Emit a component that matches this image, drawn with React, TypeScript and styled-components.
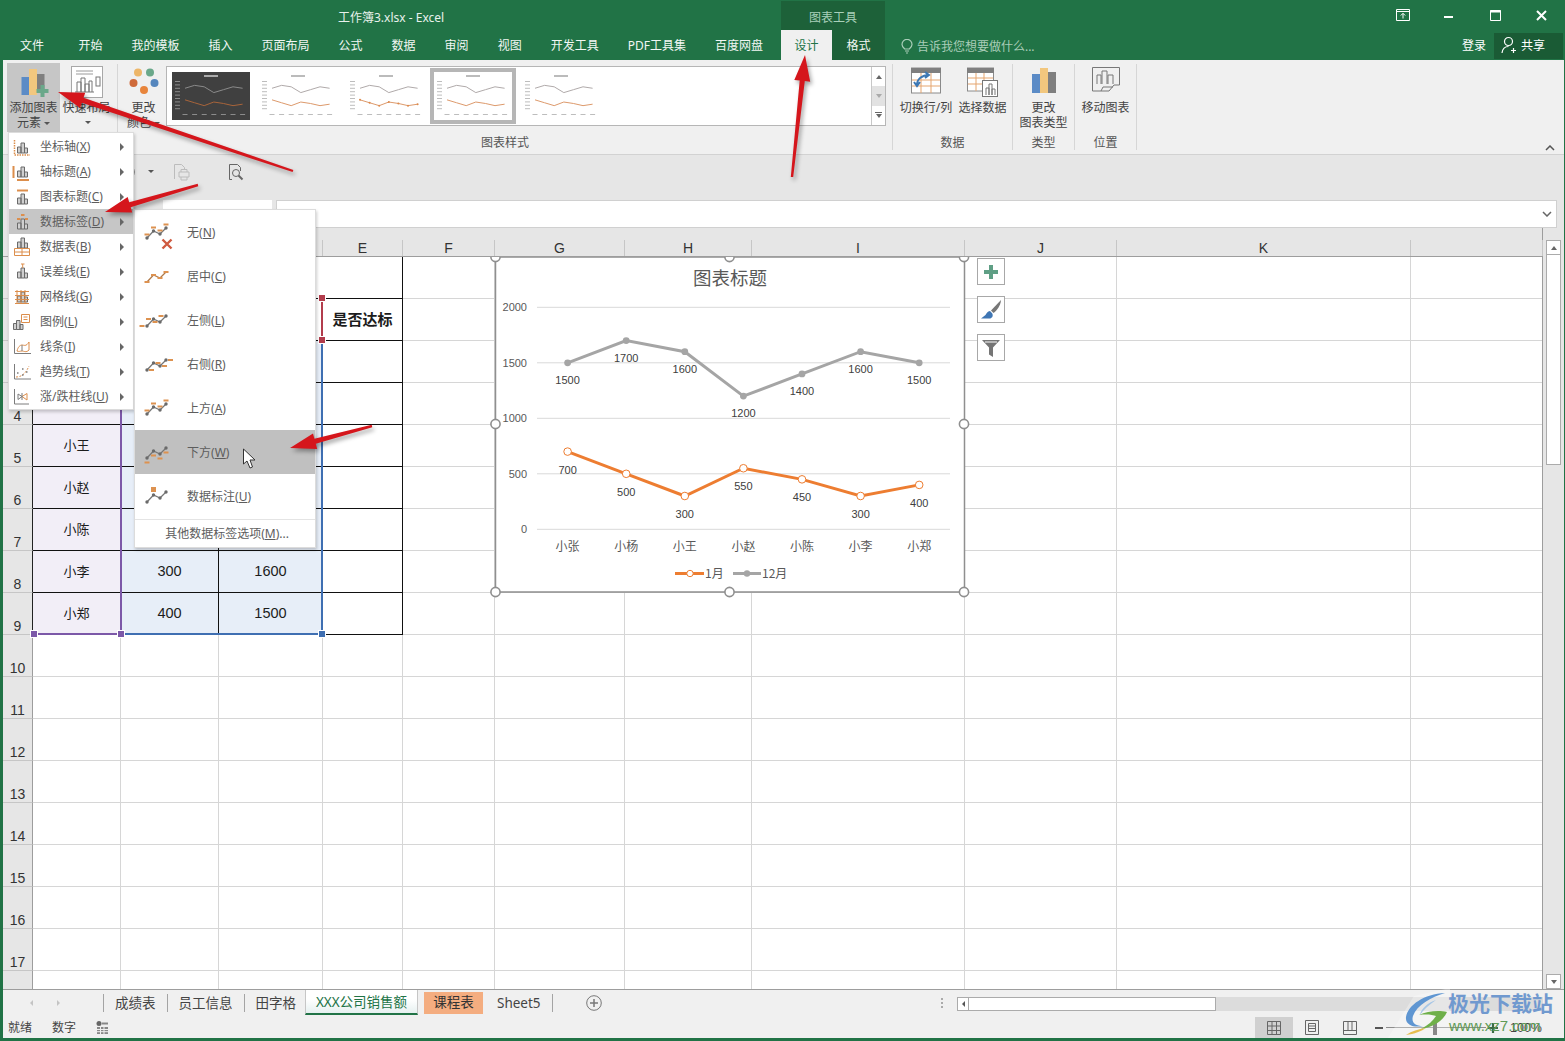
import React from 'react';
import styled, { createGlobalStyle } from 'styled-components';

const UI_FONT = '"Noto Sans", "Noto Sans CJK SC", sans-serif';
const SHEET_FONT = '"Liberation Sans", "Noto Sans CJK SC", sans-serif';
const GREEN = '#217346';

const COLS = [88, 98, 104, 80, 92, 130, 127, 213, 152, 294, 132];
const COL_TEMPLATE = `30px ${COLS.map((c) => c + 'px').join(' ')}`;
// the first three column letters lie under the open menus
const COL_NAMES = ['', '', '', 'E', 'F', 'G', 'H', 'I', 'J', 'K', ''];

const PEOPLE = ['小张', '小杨', '小王', '小赵', '小陈', '小李', '小郑'];
const JAN = [700, 500, 300, 550, 450, 300, 400];
const DEC = [1500, 1700, 1600, 1200, 1400, 1600, 1500];

const GlobalStyle = createGlobalStyle`
  html, body {
    margin: 0;
    padding: 0;
    overflow: hidden;
    background: ${GREEN};
  }
  * { box-sizing: border-box; }
`;

const Root = styled.div`
  position: relative;
  width: 1565px;
  height: 1041px;
  overflow: hidden;
  background: ${GREEN};
  font-family: ${UI_FONT};
  font-size: 12px;
  color: #444;
  display: flex;
  flex-direction: column;
`;

const TitleBar = styled.div`
  height: 30px;
  display: grid;
  grid-template-columns: 781px 104px 1fr;
  color: #fff;
  flex: none;
`;

const DocTitle = styled.div`
  padding: 10px 0 0 338px;
  line-height: 16px;
  color: #e8f1ec;
`;

const ContextTitle = styled.div`
  margin-top: 1px;
  background: #1d6139;
  color: #a9d0b9;
  text-align: center;
  line-height: 16px;
  padding-top: 9px;
`;

const WindowButtons = styled.div`
  display: flex;
  justify-content: flex-end;
  padding-right: 1px;
`;

const WindowButton = styled.div`
  width: 46px;
  height: 30px;
  display: flex;
  align-items: center;
  justify-content: center;
`;

const TabBar = styled.div`
  height: 30px;
  display: flex;
  align-items: stretch;
  padding-left: 3px;
  flex: none;
  color: #fff;
`;

const Tab = styled.div<{ $file?: boolean }>`
  padding: ${(p) => (p.$file ? '0 20px 0 17px' : '0 14.5px')};
  line-height: 31px;
  color: #f2f7f4;
`;

const ContextTabs = styled.div`
  display: flex;
  margin-left: 3.5px;
  background: #1d6139;
`;

const ContextTab = styled.div<{ $active?: boolean }>`
  width: ${(p) => (p.$active ? 51 : 53)}px;
  text-align: center;
  line-height: 31px;
  background: ${(p) => (p.$active ? '#f0f0f0' : 'transparent')};
  color: ${(p) => (p.$active ? '#217346' : '#f2f7f4')};
`;

const TellMe = styled.div`
  margin-left: 16px;
  padding-top: 2px;
  display: flex;
  align-items: center;
  gap: 4px;
  color: #a9cdb8;
`;

const LoginLink = styled.div`
  margin-left: auto;
  margin-right: 8px;
  line-height: 31px;
`;

const ShareButton = styled.div`
  width: 69px;
  height: 26px;
  margin: 3px 2px 0 0;
  padding: 0 0 2px 7px;
  background: #1a5b35;
  display: flex;
  align-items: center;
  gap: 3px;
`;

const Ribbon = styled.div`
  margin: 0 1px 0 3px;
  height: 95px;
  background: #f0f0f0;
  border-bottom: 1px solid #d2d2d2;
  display: flex;
  flex: none;
  position: relative;
`;

const Group = styled.div<{ $width: number }>`
  width: ${(p) => p.$width}px;
  margin-top: 4px;
  height: 86px;
  padding: 0 3px;
  border-right: 1px solid #d6d6d6;
  display: flex;
  flex-direction: column;
  flex: none;
`;

const GroupBody = styled.div`
  display: flex;
  margin-top: -1px;
  height: 69px;
  flex: none;
`;

const GroupLabel = styled.div`
  text-align: center;
  line-height: 16px;
  color: #555;
  margin-top: 3px;
  flex: none;
`;

const BigButton = styled.div<{ $width: number; $active?: boolean; $inset?: number }>`
  width: ${(p) => p.$width}px;
  margin-left: ${(p) => p.$inset ?? 0}px;
  display: flex;
  flex-direction: column;
  align-items: center;
  padding-top: 3px;
  line-height: 15px;
  text-align: center;
  white-space: nowrap;
  flex: none;
  background: ${(p) => (p.$active ? '#c6c6c6' : 'transparent')};
`;

const IconSlot = styled.div`
  height: 34px;
  display: flex;
  align-items: flex-start;
  justify-content: center;
`;

const Caret = styled.span<{ $drop?: number }>`
  display: inline-block;
  width: 0;
  height: 0;
  margin-left: 3px;
  margin-top: ${(p) => p.$drop ?? 0}px;
  vertical-align: middle;
  border-left: 3px solid transparent;
  border-right: 3px solid transparent;
  border-top: 3px solid #555;
`;

const Gallery = styled.div`
  width: 720px;
  height: 60px;
  margin: 3px 0 0 0;
  background: #fff;
  border: 1px solid #b6b6b6;
  display: flex;
  flex: none;
`;

const ThumbRow = styled.div`
  flex: 1;
  display: flex;
  align-items: center;
`;

const ThumbSlot = styled.div`
  width: 87.5px;
  display: flex;
  justify-content: center;
`;

const ThumbFrame = styled.div<{ $selected?: boolean }>`
  width: 78px;
  height: 48px;
  display: flex;
  box-shadow: ${(p) => (p.$selected ? '0 0 0 4px #b6b6b6' : 'none')};
`;

const GalleryScroll = styled.div`
  width: 14px;
  display: flex;
  flex-direction: column;
  border-left: 1px solid #c8c8c8;
`;

const GalleryStep = styled.div<{ $dim?: boolean }>`
  flex: 1;
  display: flex;
  flex-direction: column;
  align-items: center;
  justify-content: center;
  gap: 1px;
  background: ${(p) => (p.$dim ? '#e2e2e2' : '#fff')};
`;

const StepUp = styled.span`
  width: 0;
  height: 0;
  border-left: 3px solid transparent;
  border-right: 3px solid transparent;
  border-bottom: 4px solid #666;
`;

const StepDown = styled.span<{ $dim?: boolean }>`
  width: 0;
  height: 0;
  border-left: 3px solid transparent;
  border-right: 3px solid transparent;
  border-top: 4px solid ${(p) => (p.$dim ? '#aaa' : '#666')};
`;

const StepBar = styled.span`
  width: 7px;
  height: 1px;
  background: #666;
`;

const CollapseRibbon = styled.div`
  position: absolute;
  right: 9px;
  bottom: 3px;
  line-height: 0;
`;

const QuickBar = styled.div`
  margin: 0 1px 0 3px;
  height: 45px;
  background: #e6e6e6;
  display: flex;
  align-items: center;
  padding: 0 0 12px 127px;
  flex: none;
`;

const QuickIcon = styled.div<{ $gap: number }>`
  margin-left: ${(p) => p.$gap}px;
  line-height: 0;
`;

const FormulaBar = styled.div`
  margin: 0 1px 0 3px;
  height: 28px;
  background: #e6e6e6;
  display: flex;
  padding-left: 160px;
  gap: 4px;
  flex: none;
`;

const NameBox = styled.div`
  width: 109px;
  background: #fff;
  border-bottom: 1px solid #cfcfcf;
  display: flex;
  justify-content: flex-end;
  padding: 9px 15px 0 0;
`;

const FormulaInput = styled.div`
  flex: 1;
  margin-right: 7px;
  background: #fff;
  border: 1px solid #d0d0d0;
  display: flex;
  justify-content: flex-end;
  align-items: center;
  padding-right: 4px;
`;

const Workspace = styled.div`
  margin: 0 1px 0 3px;
  height: 761px;
  display: flex;
  background: #e6e6e6;
  flex: none;
`;

const SheetColumn = styled.div`
  width: 1540px;
  display: flex;
  flex-direction: column;
  border-right: 1px solid #9d9d9d;
`;

const HeaderRow = styled.div`
  height: 29px;
  padding-top: 12px;
  display: grid;
  grid-template-columns: ${COL_TEMPLATE};
  border-bottom: 1px solid #9d9d9d;
  flex: none;
`;

const ColHead = styled.div`
  border-right: 1px solid #c6c6c6;
  text-align: center;
  font-family: ${SHEET_FONT};
  font-size: 14px;
  line-height: 16px;
  color: #333;
`;

const GridBody = styled.div`
  position: relative;
  height: 732px;
  overflow: hidden;
  background: #fff;
  display: grid;
  grid-template-columns: ${COL_TEMPLATE};
  grid-auto-rows: 42px;
`;

const RowHead = styled.div<{ $boxed?: boolean }>`
  background: #e6e6e6;
  border-bottom: 1px solid #c6c6c6;
  border-right: 1px solid ${(p) => (p.$boxed ? '#222' : '#9d9d9d')};
  display: flex;
  align-items: flex-end;
  justify-content: center;
  font-family: ${SHEET_FONT};
  font-size: 14px;
  line-height: 15px;
  color: #333;
`;

const Cell = styled.div<{ $boxed?: boolean; $fill?: string; $size?: number; $bold?: boolean; $span?: number }>`
  grid-column: span ${(p) => p.$span ?? 1};
  display: flex;
  align-items: center;
  justify-content: center;
  padding-bottom: 2px;
  background: ${(p) => p.$fill ?? '#fff'};
  border-right: 1px solid ${(p) => (p.$boxed ? '#111' : '#d6d6d6')};
  border-bottom: 1px solid ${(p) => (p.$boxed ? '#111' : '#d6d6d6')};
  font-family: ${SHEET_FONT};
  font-size: ${(p) => p.$size ?? 14.5}px;
  font-weight: ${(p) => (p.$bold ? 700 : 400)};
  color: #1c1c1c;
`;

const Range = styled.div<{ $x: number; $y: number; $w: number; $h: number; $color: string; $bottom?: boolean }>`
  position: absolute;
  left: ${(p) => p.$x - 3}px;
  top: ${(p) => p.$y - 257}px;
  width: ${(p) => p.$w}px;
  height: ${(p) => p.$h}px;
  border-right: 2px solid ${(p) => p.$color};
  border-bottom: ${(p) => (p.$bottom ? `2px solid ${p.$color}` : 'none')};
`;

const RangeHandle = styled.div<{ $x: number; $y: number; $color: string }>`
  position: absolute;
  left: ${(p) => p.$x - 3 - 3}px;
  top: ${(p) => p.$y - 257 - 3}px;
  width: 6px;
  height: 6px;
  background: ${(p) => p.$color};
  outline: 1px solid #fff;
`;

const ChartLayer = styled.svg`
  position: absolute;
  left: 482px;
  top: 0;
  width: 495px;
  height: 345px;
  font-family: ${SHEET_FONT};
`;

const ChartTools = styled.div`
  position: absolute;
  left: 974px;
  top: 1px;
  display: flex;
  flex-direction: column;
  gap: 11px;
`;

const ChartTool = styled.div`
  width: 28px;
  height: 27px;
  background: #fff;
  border: 1px solid #a8a8a8;
  display: flex;
  align-items: center;
  justify-content: center;
`;

const VScroll = styled.div`
  width: 21px;
  padding: 12px 3px 0 3px;
  display: flex;
  flex-direction: column;
`;

const ScrollButton = styled.div`
  height: 15px;
  background: #fff;
  border: 1px solid #ababab;
  display: flex;
  align-items: center;
  justify-content: center;
  flex: none;
`;

const ScrollThumb = styled.div`
  height: 210px;
  background: #fff;
  border: 1px solid #ababab;
  border-top: none;
  flex: none;
`;

const ScrollGap = styled.div`
  flex: 1;
`;

const SheetTabsRow = styled.div`
  margin: 0 1px 0 3px;
  height: 28px;
  background: #f0f0f0;
  border-top: 1px solid #9d9d9d;
  display: flex;
  align-items: center;
  flex: none;
`;

const TabNav = styled.div`
  width: 100px;
  margin-bottom: 2px;
  display: flex;
  padding-left: 27px;
  gap: 24px;
  flex: none;
`;

const NavArrow = styled.span<{ $right?: boolean; $strong?: boolean }>`
  width: 0;
  height: 0;
  border-top: 3px solid transparent;
  border-bottom: 3px solid transparent;
  ${(p) =>
    p.$right
      ? `border-left: 3px solid ${p.$strong ? '#555' : '#c4c4c4'};`
      : `border-right: 3px solid ${p.$strong ? '#555' : '#c4c4c4'};`}
`;

const SheetTab = styled.div<{ $line?: boolean }>`
  padding: 0 11px;
  margin-bottom: 2px;
  min-height: 18px;
  line-height: 18px;
  font-size: 13.5px;
  color: #444;
  border-left: ${(p) => (p.$line ? '1px solid #a4a4a4' : '0')};
  white-space: nowrap;
`;

const ActiveSheetTab = styled.div`
  width: 113px;
  height: 25px;
  margin-left: -2px;
  align-self: flex-start;
  text-align: center;
  line-height: 24px;
  font-size: 13.5px;
  color: #217346;
  background: linear-gradient(#fff 40%, #e6f0f0);
  border-bottom: 2px solid #217346;
  border-left: 1px solid #c6c6c6;
  border-right: 1px solid #c6c6c6;
  white-space: nowrap;
`;

const ColorSheetTab = styled.div`
  width: 59px;
  height: 22px;
  margin: 0 3px 2px 6px;
  text-align: center;
  line-height: 21px;
  font-size: 13.5px;
  background: #f4ad80;
  color: #333;
`;

const AddSheet = styled.div`
  margin: 0 0 2px 11px;
  line-height: 0;
`;

const Kebab = styled.div`
  margin-left: auto;
  margin-right: 14px;
  width: 2px;
  height: 11px;
  background-image: linear-gradient(#aaa 50%, transparent 50%);
  background-size: 2px 4px;
`;

const HScroll = styled.div`
  width: 586px;
  height: 14px;
  margin-right: 21px;
  background: #dcdcdc;
  display: flex;
`;

const HScrollThumb = styled.div`
  width: 259px;
  background: #fff;
  border: 1px solid #ababab;
  display: flex;
  align-items: center;
`;

const HScrollLeft = styled.div`
  width: 11px;
  height: 100%;
  border-right: 1px solid #ababab;
  display: flex;
  align-items: center;
  justify-content: center;
`;

const StatusBar = styled.div`
  margin: 0 1px 0 3px;
  height: 21px;
  background: #f0f0f0;
  display: flex;
  align-items: center;
  padding-left: 5px;
  flex: none;
`;

const StatusText = styled.span`
  margin-right: 20px;
  line-height: 20px;
`;

const ViewSwitch = styled.div`
  margin-left: auto;
  display: flex;
  height: 21px;
`;

const ViewButton = styled.div<{ $active?: boolean }>`
  width: 38px;
  display: flex;
  align-items: center;
  justify-content: center;
  background: ${(p) => (p.$active ? '#d0d0d0' : 'transparent')};
`;

const ZoomControl = styled.div`
  display: flex;
  align-items: center;
  width: 195px;
  padding-left: 6px;
`;

const ZoomSign = styled.span`
  width: 8px;
  height: 2px;
  background: #555;
  flex: none;
`;

const ZoomTrack = styled.div`
  position: relative;
  width: 100px;
  height: 1px;
  margin: 0 2px 0 3px;
  background: #8d8d8d;
  flex: none;
`;

const ZoomThumb = styled.span`
  position: absolute;
  left: 47px;
  top: -7px;
  width: 4px;
  height: 15px;
  background: #555;
`;

const ZoomValue = styled.span`
  margin-left: 12px;
  font-family: ${SHEET_FONT};
  font-size: 12.5px;
`;

const Menu = styled.div`
  position: absolute;
  left: 8px;
  top: 132px;
  width: 126px;
  height: 278px;
  padding-top: 1px;
  background: #fff;
  border: 1px solid #dcdcdc;
  box-shadow: 1px 2px 3px rgba(0, 0, 0, 0.2);
`;

const MenuItem = styled.div<{ $active?: boolean }>`
  height: 25px;
  display: flex;
  align-items: center;
  background: ${(p) => (p.$active ? '#c6c6c6' : 'transparent')};
  color: #5d5d5d;
  padding-right: 9px;
`;

const MenuLabel = styled.span`
  margin-left: 7px;
  line-height: 16px;
  white-space: nowrap;
`;

const MenuArrow = styled.span`
  margin-left: auto;
  width: 0;
  height: 0;
  border-top: 4px solid transparent;
  border-bottom: 4px solid transparent;
  border-left: 4px solid #666;
`;

const SubMenu = styled.div`
  position: absolute;
  left: 134px;
  top: 209px;
  width: 182px;
  height: 339px;
  background: #fff;
  border: 1px solid #dcdcdc;
  box-shadow: 1px 2px 3px rgba(0, 0, 0, 0.2);
`;

const SubItem = styled.div<{ $active?: boolean }>`
  height: 44px;
  display: flex;
  align-items: center;
  padding-left: 9px;
  gap: 13px;
  color: #5d5d5d;
  background: ${(p) => (p.$active ? '#c0c0c0' : 'transparent')};
`;

const SubFooter = styled.div`
  margin-top: 1px;
  padding-left: 4px;
  border-top: 1px solid #e4e4e4;
  height: 28px;
  line-height: 27px;
  text-align: center;
  color: #5d5d5d;
  white-space: nowrap;
`;

const ArrowLayer = styled.svg`
  position: absolute;
  left: 0;
  top: 0;
  width: 1565px;
  height: 1041px;
  pointer-events: none;
`;

const Watermark = styled.div`
  position: absolute;
  left: 1388px;
  top: 988px;
  width: 177px;
  height: 50px;
  pointer-events: none;
`;

const WatermarkTitle = styled.div`
  position: absolute;
  left: 60px;
  top: 1px;
  font-family: "Noto Sans CJK SC", sans-serif;
  font-size: 21px;
  line-height: 26px;
  font-weight: 700;
  color: #7099cf;
  white-space: nowrap;
`;

const WatermarkUrl = styled.div`
  position: absolute;
  left: 61px;
  top: 30px;
  font-family: ${SHEET_FONT};
  font-size: 15px;
  line-height: 16px;
  color: #5f9a55;
  white-space: nowrap;
`;

const BarGlyph = ({ y = 0 }: { y?: number }) => (
  <path
    transform={`translate(0 ${y})`}
    d="M8.5 16V10h3.500v6zM12 16V6h3.500v10zM15.500 16v-5h3v5z"
    fill="#d0d0d0"
    stroke="#6a6a6a"
  />
);

const MenuGlyph = ({ kind }: { kind: string }) => {
  const orange = '#dc8e4c';
  const grey = '#7c7c7c';
  return (
    <svg width="24" height="20" viewBox="0 0 24 20">
      {kind === 'axis' && (
        <>
          <BarGlyph />
          <path d="M5.500 3v15H21" fill="none" stroke={orange} strokeWidth="1.500" strokeDasharray="1.500 1" />
        </>
      )}
      {kind === 'axisTitle' && (
        <>
          <BarGlyph y={-1} />
          <path d="M4.500 4v12M8 18h12" fill="none" stroke={orange} strokeWidth="2" />
        </>
      )}
      {kind === 'chartTitle' && (
        <>
          <BarGlyph y={1} />
          <path d="M8 3.500h11" stroke={orange} strokeWidth="2" />
        </>
      )}
      {kind === 'dataLabel' && (
        <>
          <BarGlyph y={1} />
          <path d="M8 7h3.500M12 3h3.500M16 7h3" stroke={orange} strokeWidth="2" />
        </>
      )}
      {kind === 'dataTable' && (
        <>
          <BarGlyph y={-5} />
          <path d="M5.500 11.500h15v7h-15zM5.500 15h15M13 11.500v7" fill="none" stroke={orange} />
        </>
      )}
      {kind === 'errorBar' && (
        <>
          <BarGlyph />
          <path d="M13.700 2v4M12 2h3.500" fill="none" stroke={orange} />
        </>
      )}
      {kind === 'gridline' && (
        <>
          <BarGlyph y={-1} />
          <path d="M6 4.500h14M6 8.500h14M6 12.500h14M6 16.500h14M8 3v14M12 3v14M16 3v14" stroke={orange} />
        </>
      )}
      {kind === 'legend' && (
        <>
          <path d="M4.500 17.500v-6h3v6zM7.500 17.500v-9h3.500v9zM11 17.500v-5h3v5z" fill="#d0d0d0" stroke="#6a6a6a" />
          <path d="M12.500 2.500h8v8h-8zM14.500 5h4M14.500 7.500h4" fill="#fff" stroke={orange} />
        </>
      )}
      {kind === 'lines' && (
        <>
          <path d="M5.500 2v14.500H22" fill="none" stroke={grey} />
          <path d="M8 14c1-4 3-6 5-6s4 2 7-3v8c-3 3-5 1-7 1s-3 1-5 0z" fill="none" stroke={orange} />
          <path d="M13 8v6" stroke={grey} />
        </>
      )}
      {kind === 'trend' && (
        <>
          <path d="M5.500 2v15H22" fill="none" stroke={grey} />
          <path d="M7 15c6 0 10-4 13-11" fill="none" stroke={orange} strokeDasharray="2 1.500" />
          <path d="M8 11h1.500M13 13h1.500M13 7h1.500M17 10h1.500" stroke={grey} strokeWidth="1.500" />
        </>
      )}
      {kind === 'updown' && (
        <>
          <path d="M5.500 2v15H20" fill="none" stroke={grey} />
          <path d="M9 7l4 2.500-4 3z" fill="none" stroke={grey} />
          <path d="M18 6.500l-5 3 5 3.500z" fill="none" stroke={orange} />
          <path d="M13 6v7" stroke={grey} />
        </>
      )}
    </svg>
  );
};

const LINE_POINTS = [
  [3, 20],
  [9.500, 13],
  [16, 16],
  [22, 10],
];

// where the orange label dash sits, relative to each point of the line
const DASH_OFFSET: Record<string, [number, number]> = {
  none: [-2.500, -4.500],
  center: [-2.500, -1],
  left: [-7.500, -1],
  right: [2, -1],
  above: [-2.500, -4.500],
  below: [-2.500, 3.500],
};

const SubGlyph = ({ kind }: { kind: string }) => {
  const orange = '#dd9250';
  const points = LINE_POINTS.map((p) => p.join(',')).join(' ');
  const offset = DASH_OFFSET[kind];
  return (
    <svg width="30" height="28" viewBox="0 0 30 28" style={{ overflow: 'visible' }}>
      <polyline points={points} fill="none" stroke={kind === 'center' ? '#b07a4a' : '#767676'} strokeWidth="1.300" />
      {kind !== 'center' &&
        LINE_POINTS.map(([x, y]) => <circle key={x} cx={x} cy={y} r="1.700" fill="#6a6a6a" />)}
      {offset &&
        LINE_POINTS.map(([x, y]) => (
          <rect key={x} x={x + offset[0]} y={y + offset[1]} width="5" height="2" fill={orange} />
        ))}
      {kind === 'callout' && <rect x="7" y="5" width="5" height="5" fill={orange} />}
      {kind === 'none' && <path d="M18.500 21.500l9 9M27.500 21.500l-9 9" stroke="#cf5a40" strokeWidth="2.400" />}
    </svg>
  );
};

const MENU_ITEMS = [
  ['axis', '坐标轴', 'X'],
  ['axisTitle', '轴标题', 'A'],
  ['chartTitle', '图表标题', 'C'],
  ['dataLabel', '数据标签', 'D'],
  ['dataTable', '数据表', 'B'],
  ['errorBar', '误差线', 'E'],
  ['gridline', '网格线', 'G'],
  ['legend', '图例', 'L'],
  ['lines', '线条', 'I'],
  ['trend', '趋势线', 'T'],
  ['updown', '涨/跌柱线', 'U'],
];

const SUB_ITEMS = [
  ['none', '无', 'N'],
  ['center', '居中', 'C'],
  ['left', '左侧', 'L'],
  ['right', '右侧', 'R'],
  ['above', '上方', 'A'],
  ['below', '下方', 'W'],
  ['callout', '数据标注', 'U'],
];

const Thumb = ({ dark, markers }: { dark?: boolean; markers?: boolean }) => {
  const x = (i: number) => 13 + i * 9.600;
  const y = (v: number) => 38 - v * 0.0145;
  const line = (data: number[]) => data.map((v, i) => `${x(i)},${y(v)}`).join(' ');
  const tick = dark ? '#8c8c8c' : '#bdbdbd';
  return (
    <svg width="78" height="48" viewBox="0 0 78 48">
      <rect width="78" height="48" fill={dark ? '#404040' : '#fff'} />
      <rect x="32" y="3" width="14" height="2" fill={dark ? '#aaa' : '#bbb'} />
      {[0, 1, 2, 3, 4, 5, 6, 7, 8].map((i) => (
        <rect key={i} x="3" y={9 + i * 3.400} width="5" height="1" fill={tick} />
      ))}
      <polyline points={line(DEC)} fill="none" stroke={dark ? '#8a8a8a' : '#b0aaaa'} strokeWidth="1" />
      <polyline points={line(JAN)} fill="none" stroke={dark ? '#a8643a' : '#dd9a6c'} strokeWidth="1" />
      {markers && JAN.map((v, i) => <circle key={i} cx={x(i)} cy={y(v)} r="1" fill="#dd8a4c" />)}
      {PEOPLE.map((_, i) => (
        <rect key={i} x={x(i) - 2.500} y="42" width="5" height="1" fill={tick} />
      ))}
    </svg>
  );
};

const arrowPoints = (x1: number, y1: number, x2: number, y2: number) => {
  const len = Math.hypot(x2 - x1, y2 - y1);
  const ux = (x2 - x1) / len;
  const uy = (y2 - y1) / len;
  const nx = -uy;
  const ny = ux;
  const bx = x2 - ux * 26;
  const by = y2 - uy * 26;
  const pts = [
    [x1 + nx * 1.200, y1 + ny * 1.200],
    [bx + nx * 2.600, by + ny * 2.600],
    [bx + nx * 8, by + ny * 8],
    [x2, y2],
    [bx - nx * 8, by - ny * 8],
    [bx - nx * 2.600, by - ny * 2.600],
    [x1 - nx * 1.200, y1 - ny * 1.200],
  ];
  return pts.map((p) => p.map((n) => n.toFixed(1)).join(',')).join(' ');
};

const chartX = (i: number) => 567.600 + i * 58.600;
const chartY = (v: number) => 529.300 - v * 0.111;
const seriesPoints = (data: number[]) => data.map((v, i) => `${chartX(i)},${chartY(v)}`).join(' ');

const ChartDrawing = () => (
  <ChartLayer viewBox="485 257 495 345">
    <rect x="495.500" y="257" width="469" height="335" fill="#fff" stroke="#8f8f8f" strokeWidth="1.500" />
    <text x="730" y="285" textAnchor="middle" fontSize="18.500" fill="#595959" fontFamily="Noto Sans CJK SC">
      图表标题
    </text>
    {[0, 500, 1000, 1500, 2000].map((v) => (
      <g key={v}>
        <line x1="537" x2="950" y1={chartY(v)} y2={chartY(v)} stroke="#d9d9d9" />
        <text x="527" y={chartY(v) + 4} textAnchor="end" fontSize="11" fill="#595959">
          {v}
        </text>
      </g>
    ))}
    {PEOPLE.map((p, i) => (
      <text key={p} x={chartX(i)} y="551" textAnchor="middle" fontSize="12" fill="#595959" fontFamily="Noto Sans CJK SC">
        {p}
      </text>
    ))}
    <polyline points={seriesPoints(DEC)} fill="none" stroke="#a5a5a5" strokeWidth="3" />
    {DEC.map((v, i) => (
      <g key={i}>
        <circle cx={chartX(i)} cy={chartY(v)} r="3.400" fill="#a5a5a5" />
        <text x={chartX(i)} y={chartY(v) + 21} textAnchor="middle" fontSize="11" fill="#404040">
          {v}
        </text>
      </g>
    ))}
    <polyline points={seriesPoints(JAN)} fill="none" stroke="#ed7d31" strokeWidth="3" />
    {JAN.map((v, i) => (
      <g key={i}>
        <circle cx={chartX(i)} cy={chartY(v)} r="3.800" fill="#fff" stroke="#ed7d31" />
        <text x={chartX(i)} y={chartY(v) + 22} textAnchor="middle" fontSize="11" fill="#404040">
          {v}
        </text>
      </g>
    ))}
    <line x1="675" x2="704" y1="573.500" y2="573.500" stroke="#ed7d31" strokeWidth="3" />
    <circle cx="690" cy="573.500" r="3.200" fill="#fff" stroke="#ed7d31" />
    <text x="705" y="578" fontSize="12" fill="#595959" fontFamily="Noto Sans CJK SC">1月</text>
    <line x1="733" x2="761" y1="573.500" y2="573.500" stroke="#a5a5a5" strokeWidth="3" />
    <circle cx="747" cy="573.500" r="3.200" fill="#a5a5a5" />
    <text x="762" y="578" fontSize="12" fill="#595959" fontFamily="Noto Sans CJK SC">12月</text>
    {[[495.500, 257], [729.500, 257], [964, 257], [495.500, 424], [964, 424], [495.500, 592], [729.500, 592], [964, 592]].map(([cx, cy]) => (
      <circle key={`${cx}-${cy}`} cx={cx} cy={cy} r="4.600" fill="#fff" stroke="#8f8f8f" strokeWidth="1.600" />
    ))}
  </ChartLayer>
);

// Cells that the open menus cover stay empty; only what shows in the picture has text.
const SheetRows = () => {
  const rows: React.ReactNode[] = [];
  for (let r = 1; r <= 18; r++) {
    const boxed = r >= 2 && r <= 9;
    rows.push(
      <RowHead key={`h${r}`} $boxed={boxed}>
        {r <= 17 ? r : ''}
      </RowHead>,
    );
    if (r === 1) {
      rows.push(<Cell key="title" $span={4} $boxed />);
    } else if (r === 2) {
      rows.push(<Cell key="h-a" $boxed />);
      rows.push(<Cell key="h-b" $boxed />);
      rows.push(<Cell key="h-c" $boxed />);
      rows.push(<Cell key="h-e" $boxed $bold $size={15}>是否达标</Cell>);
    } else if (boxed) {
      const i = r - 3;
      const nameShows = r >= 5;
      const valueShows = r >= 8;
      rows.push(<Cell key={`a${r}`} $boxed $fill="#f2eef7" $size={13}>{nameShows ? PEOPLE[i] : ''}</Cell>);
      rows.push(<Cell key={`b${r}`} $boxed $fill="#e7eef8">{valueShows ? JAN[i] : ''}</Cell>);
      rows.push(<Cell key={`c${r}`} $boxed $fill="#e7eef8">{valueShows ? DEC[i] : ''}</Cell>);
      rows.push(<Cell key={`e${r}`} $boxed />);
    } else {
      for (let c = 0; c < 4; c++) rows.push(<Cell key={`l${r}-${c}`} />);
    }
    for (let c = 4; c < COLS.length; c++) rows.push(<Cell key={`${r}-${c}`} />);
  }
  return <>{rows}</>;
};

const App = () => (
  <Root>
    <GlobalStyle />

    <TitleBar>
      <DocTitle>工作簿3.xlsx - Excel</DocTitle>
      <ContextTitle>图表工具</ContextTitle>
      <WindowButtons>
        <WindowButton>
          <svg width="14" height="12" viewBox="0 0 14 12" fill="none" stroke="#fff">
            <path d="M.5.500h13v11H.5zM.5 2.500h13M7 9.500V4.500M4.800 6.500 7 4.300l2.200 2.200" />
          </svg>
        </WindowButton>
        <WindowButton>
          <svg width="10" height="10" viewBox="0 0 10 10"><rect y="6" width="9" height="2" fill="#fff" /></svg>
        </WindowButton>
        <WindowButton>
          <svg width="11" height="11" viewBox="0 0 11 11" fill="none" stroke="#fff">
            <path d="M.5.500h10v10H.5z" />
            <path d="M0 1.500h11" strokeWidth="2" />
          </svg>
        </WindowButton>
        <WindowButton>
          <svg width="11" height="11" viewBox="0 0 11 11" stroke="#fff" strokeWidth="2">
            <path d="M1 1l9 9M10 1l-9 9" />
          </svg>
        </WindowButton>
      </WindowButtons>
    </TitleBar>

    <TabBar>
      <Tab $file>文件</Tab>
      <Tab>开始</Tab>
      <Tab>我的模板</Tab>
      <Tab>插入</Tab>
      <Tab>页面布局</Tab>
      <Tab>公式</Tab>
      <Tab>数据</Tab>
      <Tab>审阅</Tab>
      <Tab>视图</Tab>
      <Tab>开发工具</Tab>
      <Tab>PDF工具集</Tab>
      <Tab>百度网盘</Tab>
      <ContextTabs>
        <ContextTab $active>设计</ContextTab>
        <ContextTab>格式</ContextTab>
      </ContextTabs>
      <TellMe>
        <svg width="12" height="15" viewBox="0 0 12 15" fill="none" stroke="#a9cdb8" strokeWidth="1.200">
          <path d="M3.800 10C2.500 8.800 1 7.600 1 5.400A5 5 0 0 1 11 5.400c0 2.200-1.500 3.400-2.800 4.600zM4 12h4M5 14h2" />
        </svg>
        告诉我您想要做什么...
      </TellMe>
      <LoginLink>登录</LoginLink>
      <ShareButton>
        <svg width="17" height="18" viewBox="0 0 17 18" fill="none" stroke="#fff" strokeWidth="1.200">
          <path d="M7.500 1.500a4 4 0 1 1 0 8 4 4 0 0 1 0-8zM1 17c.5-4 3-6.500 6.500-6.500M12.500 12v5M10 14.500h5" />
        </svg>
        共享
      </ShareButton>
    </TabBar>

    <Ribbon>
      <Group $width={115}>
        <GroupBody>
          <BigButton $width={53} $active $inset={1}>
            <IconSlot>
              <svg width="32" height="32" viewBox="0 0 32 32">
                <rect x="3.500" y="11" width="7.500" height="18" fill="#5b8bc6" />
                <rect x="11" y="3" width="8" height="26" fill="#f2c77e" />
                <rect x="19" y="8" width="7.500" height="16" fill="#7f7f7f" />
                <path d="M24.500 19v12M18.500 25h12" stroke="#6aa88a" strokeWidth="4" />
              </svg>
            </IconSlot>
            添加图表
            <span>
              元素
              <Caret />
            </span>
          </BigButton>
          <BigButton $width={53}>
            <IconSlot>
              <svg width="32" height="32" viewBox="0 0 32 32" fill="none">
                <rect x=".5" y=".5" width="31" height="31" stroke="#a8a8a8" fill="#fff" />
                <path d="M5 5h17M5 8h17" stroke="#9a9a9a" />
                <path d="M6 26V16h4v10M10 26V12h4v14M14 26V18h4v8M18 26V15h3v11M4 26h19" stroke="#777" />
                <rect x="25" y="11" width="4" height="9" stroke="#777" />
              </svg>
            </IconSlot>
            快速布局
            <Caret $drop={6} />
          </BigButton>
        </GroupBody>
      </Group>
      <Group $width={775}>
        <GroupBody>
          <BigButton $width={45}>
            <IconSlot>
              <svg width="30" height="32" viewBox="0 0 30 32">
                <circle cx="9" cy="6.500" r="4" fill="#edb668" />
                <circle cx="21" cy="6.500" r="4" fill="#6aa88a" />
                <circle cx="4.500" cy="17" r="4" fill="#cf6a3a" />
                <circle cx="25.500" cy="17" r="4" fill="#5586bd" />
                <circle cx="15" cy="24" r="4" fill="#e8853c" />
              </svg>
            </IconSlot>
            更改
            <span>
              颜色
              <Caret />
            </span>
          </BigButton>
          <Gallery>
            <ThumbRow>
              <ThumbSlot><ThumbFrame><Thumb dark /></ThumbFrame></ThumbSlot>
              <ThumbSlot><ThumbFrame><Thumb /></ThumbFrame></ThumbSlot>
              <ThumbSlot><ThumbFrame><Thumb markers /></ThumbFrame></ThumbSlot>
              <ThumbSlot><ThumbFrame $selected><Thumb /></ThumbFrame></ThumbSlot>
              <ThumbSlot><ThumbFrame><Thumb /></ThumbFrame></ThumbSlot>
            </ThumbRow>
            <GalleryScroll>
              <GalleryStep><StepUp /></GalleryStep>
              <GalleryStep $dim><StepDown $dim /></GalleryStep>
              <GalleryStep><StepBar /><StepDown /></GalleryStep>
            </GalleryScroll>
          </Gallery>
        </GroupBody>
        <GroupLabel>图表样式</GroupLabel>
      </Group>
      <Group $width={120}>
        <GroupBody>
          <BigButton $width={60}>
            <IconSlot>
              <svg width="30" height="30" viewBox="0 0 30 30" fill="none">
                <rect x=".5" y="2" width="29" height="25" fill="#fff" stroke="#8a8a8a" />
                <rect y="2" width="30" height="5" fill="#7f7f7f" />
                <path d="M1 14h28M1 20h28M10 7v20M20 7v20" stroke="#e5a56f" />
                <path d="M6 19c0-6 5-10 12-10M14 6l4 3-4 3M3 16l3 4 3-4" stroke="#3d78b4" strokeWidth="2" />
              </svg>
            </IconSlot>
            切换行/列
          </BigButton>
          <BigButton $width={53}>
            <IconSlot>
              <svg width="31" height="31" viewBox="0 0 31 31" fill="none">
                <rect x=".5" y="2" width="26" height="23" fill="#fff" stroke="#8a8a8a" />
                <rect y="2" width="27" height="5" fill="#7f7f7f" />
                <path d="M1 12h25M1 18h25M9 7v18M17 7v18" stroke="#e5a56f" />
                <rect x="15.500" y="14.500" width="15" height="16" fill="#fff" stroke="#777" />
                <path d="M19 29v-7h3v7M22 29V18h3v11M25 29v-6h3v6" stroke="#777" />
              </svg>
            </IconSlot>
            选择数据
          </BigButton>
        </GroupBody>
        <GroupLabel>数据</GroupLabel>
      </Group>
      <Group $width={62}>
        <GroupBody>
          <BigButton $width={55}>
            <IconSlot>
              <svg width="26" height="30" viewBox="0 0 26 30">
                <rect x="1" y="8" width="8" height="19" fill="#5b8bc6" />
                <rect x="9" y="2" width="8" height="25" fill="#f2c77e" />
                <rect x="17" y="6" width="8" height="21" fill="#7f7f7f" />
              </svg>
            </IconSlot>
            更改
            <span>图表类型</span>
          </BigButton>
        </GroupBody>
        <GroupLabel>类型</GroupLabel>
      </Group>
      <Group $width={62}>
        <GroupBody>
          <BigButton $width={55}>
            <IconSlot>
              <svg width="30" height="28" viewBox="0 0 30 28" fill="none" stroke="#777">
                <path d="M18 25H1.500V1.500h27V19" />
                <path d="M18 25l5-6h5.500M10 25l2-4h10" />
                <path d="M6 18V9h4v9M11 18V5h5v13M17 18V9h5v9" />
              </svg>
            </IconSlot>
            移动图表
          </BigButton>
        </GroupBody>
        <GroupLabel>位置</GroupLabel>
      </Group>
      <CollapseRibbon>
        <svg width="10" height="6" viewBox="0 0 10 6" fill="none" stroke="#555" strokeWidth="1.500">
          <path d="M1 5l4-4 4 4" />
        </svg>
      </CollapseRibbon>
    </Ribbon>

    <QuickBar>
      <svg width="8" height="12" viewBox="0 0 8 12" fill="none" stroke="#777"><path d="M2 1c3 2 3 8 0 10" /></svg>
      <QuickIcon $gap={7}><Caret /></QuickIcon>
      <QuickIcon $gap={19}>
        <svg width="18" height="18" viewBox="0 0 18 18" fill="none" stroke="#bcbcbc">
          <path d="M1.500 16V1.500h7l3 3V7M6 9h10v5H6zM8 14v3h6v-3M8 9V6.500h6V9" />
        </svg>
      </QuickIcon>
      <QuickIcon $gap={36}>
        <svg width="18" height="18" viewBox="0 0 18 18" fill="none" stroke="#666">
          <path d="M5 16.500H2.500v-15h8l3 3V8" />
          <circle cx="9" cy="10" r="3.500" />
          <path d="M11.500 12.500l4 4" strokeWidth="2" />
        </svg>
      </QuickIcon>
    </QuickBar>

    <FormulaBar>
      <NameBox><Caret /></NameBox>
      <FormulaInput>
        <svg width="10" height="6" viewBox="0 0 10 6" fill="none" stroke="#666" strokeWidth="1.500">
          <path d="M1 1l4 4 4-4" />
        </svg>
      </FormulaInput>
    </FormulaBar>

    <Workspace>
      <SheetColumn>
        <HeaderRow>
          <ColHead />
          {COL_NAMES.map((c, i) => (
            <ColHead key={i}>{c}</ColHead>
          ))}
        </HeaderRow>
        <GridBody>
          <SheetRows />
          <Range $x={121} $y={340} $w={202} $h={295} $color="#3f6fb2" $bottom />
          <Range $x={33} $y={340} $w={89} $h={295} $color="#7c58a8" $bottom />
          <Range $x={121} $y={298} $w={202} $h={42} $color="#b23c4c" />
          <RangeHandle $x={34} $y={634} $color="#7c58a8" />
          <RangeHandle $x={121} $y={634} $color="#7c58a8" />
          <RangeHandle $x={322} $y={634} $color="#3f6fb2" />
          <RangeHandle $x={322} $y={298} $color="#b23c4c" />
          <RangeHandle $x={322} $y={340} $color="#b23c4c" />
          <ChartDrawing />
          <ChartTools>
            <ChartTool>
              <svg width="16" height="16" viewBox="0 0 16 16"><path d="M8 1v14M1 8h14" stroke="#5f9f85" strokeWidth="4" /></svg>
            </ChartTool>
            <ChartTool>
              <svg width="22" height="22" viewBox="0 0 22 22">
                <path d="M21 1L11 11.500l2.500 2.500C17 11.500 20.500 7 21 1z" fill="#777" />
                <path d="M10 12c-2.500 0-3.500 2.500-4.500 4L1 19.500h8.500c2.500 0 4-2.500 2.800-5z" fill="#3f76b4" />
              </svg>
            </ChartTool>
            <ChartTool>
              <svg width="20" height="20" viewBox="0 0 20 20">
                <path d="M1 2h18l-7 7.500V19l-4-2.500V9.500z" fill="#757575" />
                <path d="M4 4h12" stroke="#fff" />
              </svg>
            </ChartTool>
          </ChartTools>
        </GridBody>
      </SheetColumn>
      <VScroll>
        <ScrollButton><StepUp /></ScrollButton>
        <ScrollThumb />
        <ScrollGap />
        <ScrollButton><StepDown /></ScrollButton>
      </VScroll>
    </Workspace>

    <SheetTabsRow>
      <TabNav>
        <NavArrow />
        <NavArrow $right />
      </TabNav>
      <SheetTab $line>成绩表</SheetTab>
      <SheetTab $line>员工信息</SheetTab>
      <SheetTab $line>田字格</SheetTab>
      <ActiveSheetTab>XXX公司销售额</ActiveSheetTab>
      <ColorSheetTab>课程表</ColorSheetTab>
      <SheetTab>Sheet5</SheetTab>
      <SheetTab $line />
      <AddSheet>
        <svg width="16" height="16" viewBox="0 0 16 16" fill="none" stroke="#777">
          <circle cx="8" cy="8" r="7.300" />
          <path d="M8 4v8M4 8h8" strokeWidth="1.500" />
        </svg>
      </AddSheet>
      <Kebab />
      <HScroll>
        <HScrollThumb>
          <HScrollLeft><NavArrow $strong /></HScrollLeft>
        </HScrollThumb>
      </HScroll>
    </SheetTabsRow>

    <StatusBar>
      <StatusText>就绪</StatusText>
      <StatusText>数字</StatusText>
      <svg width="13" height="14" viewBox="0 0 13 14">
        <circle cx="3" cy="2.500" r="2.500" fill="#666" />
        <path d="M6 1.500h6v2H6zM1 6h11v7H1z" fill="#888" />
        <path d="M1 8.500h11M1 10.700h11M4.500 6v7M8 6v7" stroke="#f0f0f0" />
      </svg>
      <ViewSwitch>
        <ViewButton $active>
          <svg width="14" height="14" viewBox="0 0 14 14" fill="none" stroke="#666">
            <path d="M.5.500h13v13H.5zM.5 5h13M.5 9.500h13M5 .5v13M9.500.5v13" />
          </svg>
        </ViewButton>
        <ViewButton>
          <svg width="14" height="15" viewBox="0 0 14 15" fill="none" stroke="#666">
            <path d="M.5.500h13v14H.5zM3.500 3.500h7v8h-7zM3.500 6h7M3.500 8.500h7" />
          </svg>
        </ViewButton>
        <ViewButton>
          <svg width="14" height="14" viewBox="0 0 14 14" fill="none" stroke="#666">
            <path d="M.5.500h13v13H.5zM.5 9.500h13M5 .5v9M9 .5v9" />
          </svg>
        </ViewButton>
      </ViewSwitch>
      <ZoomControl>
        <ZoomSign />
        <ZoomTrack><ZoomThumb /></ZoomTrack>
        <svg width="10" height="10" viewBox="0 0 10 10"><path d="M5 0v10M0 5h10" stroke="#3c6b45" strokeWidth="2.200" /></svg>
        <ZoomValue>100%</ZoomValue>
      </ZoomControl>
    </StatusBar>

    <Menu>
      {MENU_ITEMS.map(([kind, label, key]) => (
        <MenuItem key={kind} $active={kind === 'dataLabel'}>
          <MenuGlyph kind={kind} />
          <MenuLabel>
            {label}(<u>{key}</u>)
          </MenuLabel>
          <MenuArrow />
        </MenuItem>
      ))}
    </Menu>

    <SubMenu>
      {SUB_ITEMS.map(([kind, label, key]) => (
        <SubItem key={kind} $active={kind === 'below'}>
          <SubGlyph kind={kind} />
          <span>
            {label}(<u>{key}</u>)
          </span>
        </SubItem>
      ))}
      <SubFooter>
        其他数据标签选项(<u>M</u>)...
      </SubFooter>
    </SubMenu>

    <Watermark>
      <svg width="62" height="50" viewBox="0 0 62 50">
        <path d="M0 50L26 8 62 0V50z" fill="#fff" opacity="0.3" />
        <path d="M57 5C36 6 20 17 18 29c-1 8 8 11 17 9-8 0-12-4-10-10C29 17 43 9 57 5z" fill="#5f96d2" />
        <path d="M48 12c-9 3-15 9-16 15 3-5 9-10 16-15z" fill="#a6c6e6" />
        <path d="M59 24c-8-2-20-1-28 3 8-1 14 0 17 1-3 5-8 9-15 13 12-2 22-8 26-17z" fill="#6fb04a" />
        <path d="M18 47c8-1 16-4 20-7-8 1-14 3-20 7z" fill="#e6bd4e" />
      </svg>
      <WatermarkTitle>极光下载站</WatermarkTitle>
      <WatermarkUrl>www.xz7.com</WatermarkUrl>
    </Watermark>

    <ArrowLayer viewBox="0 0 1565 1041">
      <g fill="#d5161c" style={{ filter: 'drop-shadow(2px 3px 2px rgba(0,0,0,0.35))' }}>
        <polygon points={arrowPoints(293, 171, 58, 92)} />
        <polygon points={arrowPoints(198, 185, 105, 212)} />
        <polygon points={arrowPoints(372, 426, 290, 448)} />
        <polygon points={arrowPoints(792, 177, 805, 55)} />
      </g>
      <polygon
        points="243.500,449 243.500,464 247,461 250,468 252.500,467 250,460 255,460"
        fill="#fff"
        stroke="#333"
        strokeWidth="1"
      />
    </ArrowLayer>
  </Root>
);

export default App;
